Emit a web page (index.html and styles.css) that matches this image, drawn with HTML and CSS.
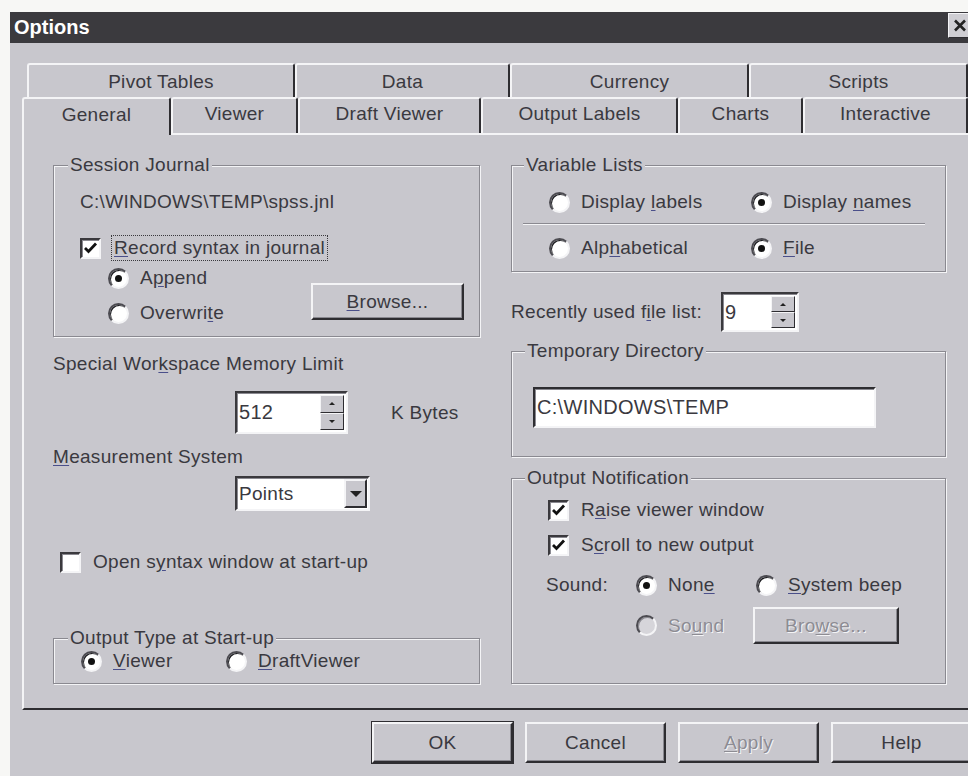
FILE: index.html
```html
<!DOCTYPE html>
<html lang="en">
<head>
<meta charset="utf-8">
<title>Options</title>
<link rel="stylesheet" href="styles.css">
</head>
<body>
<div class="window">
  <div class="titlebar">
    <span class="title">Options</span>
    <span class="close">
      <svg width="14" height="13" viewBox="0 0 14 13"><path d="M2 1.5 L12 11.5 M12 1.5 L2 11.5" stroke="#222" stroke-width="2.6" fill="none"/></svg>
    </span>
  </div>

  <div class="tabs">
    <div class="tab-row back">
      <div class="tab t-pivot">Pivot Tables</div>
      <div class="tab t-data">Data</div>
      <div class="tab t-currency">Currency</div>
      <div class="tab t-scripts">Scripts</div>
    </div>
    <div class="tab-row front">
      <div class="tab selected t-general">General</div>
      <div class="tab t-viewer">Viewer</div>
      <div class="tab t-draft">Draft Viewer</div>
      <div class="tab t-labels">Output Labels</div>
      <div class="tab t-charts">Charts</div>
      <div class="tab t-interactive">Interactive</div>
    </div>
  </div>

  <div class="panel">
    <div class="col">
      <fieldset class="group">
        <legend class="lg-left">Session Journal</legend>
        <div class="sj-body">
          <div class="line">C:\WINDOWS\TEMP\spss.jnl</div>
          <div class="line check-row sj-check">
            <span class="check"><svg width="17" height="17" viewBox="0 0 17 17"><path d="M3 8 L6.5 11.5 L14 3.5" stroke="#111" stroke-width="2.8" fill="none"/></svg></span>
            <span class="focus"><u>R</u>ecord syntax in journal</span>
          </div>
          <div class="sj-bottom">
            <div class="radios">
              <div class="line radio-row"><span class="radio on"></span><span>A<u>p</u>pend</span></div>
              <div class="line radio-row"><span class="radio"></span><span>Overwri<u>t</u>e</span></div>
            </div>
            <div class="btn btn-browse"><span><u>B</u>rowse...</span></div>
          </div>
        </div>
      </fieldset>

      <div class="line mem-label">Special Wor<u>k</u>space Memory Limit</div>
      <div class="mem-row">
        <div class="spin spin-mem">
          <span class="spin-value">512</span>
          <span class="spin-btns"><span class="spin-btn"><span class="tri-up"></span></span><span class="spin-btn"><span class="tri-down"></span></span></span>
        </div>
        <span class="kbytes">K Bytes</span>
      </div>

      <div class="line meas-label"><u>M</u>easurement System</div>
      <div class="meas-row">
        <div class="combo">
          <span class="combo-value">Points</span>
          <span class="combo-btn"><span class="tri-big"></span></span>
        </div>
      </div>

      <div class="line check-row open-row">
        <span class="check"></span>
        <span>Open s<u>y</u>ntax window at start-up</span>
      </div>

      <fieldset class="group out-type">
        <legend class="lg-left">Output Type at Start-up</legend>
        <div class="ot-body">
          <div class="line radio-row ot-item"><span class="radio on"></span><span><u>V</u>iewer</span></div>
          <div class="line radio-row"><span class="radio"></span><span><u>D</u>raftViewer</span></div>
        </div>
      </fieldset>
    </div>

    <div class="col">
      <fieldset class="group">
        <legend class="lg-right">Variable Lists</legend>
        <div class="vl-body">
          <div class="vl-row">
            <div class="line radio-row vl-item"><span class="radio"></span><span>Display <u>l</u>abels</span></div>
            <div class="line radio-row"><span class="radio on"></span><span>Display <u>n</u>ames</span></div>
          </div>
          <div class="separator"></div>
          <div class="vl-row vl-row2">
            <div class="line radio-row vl-item"><span class="radio"></span><span>Alp<u>h</u>abetical</span></div>
            <div class="line radio-row"><span class="radio on"></span><span><u>F</u>ile</span></div>
          </div>
        </div>
      </fieldset>

      <div class="recent-row">
        <span class="recent-label">Recently used f<u>i</u>le list:</span>
        <div class="spin spin-recent">
          <span class="spin-value">9</span>
          <span class="spin-btns"><span class="spin-btn"><span class="tri-up"></span></span><span class="spin-btn"><span class="tri-down"></span></span></span>
        </div>
      </div>

      <fieldset class="group temp-dir">
        <legend class="lg-right2">Temporary Directory</legend>
        <div class="td-body">
          <div class="textbox">C:\WINDOWS\TEMP</div>
        </div>
      </fieldset>

      <fieldset class="group out-notif">
        <legend class="lg-right2">Output Notification</legend>
        <div class="on-body">
          <div class="line check-row on-check">
            <span class="check"><svg width="17" height="17" viewBox="0 0 17 17"><path d="M3 8 L6.5 11.5 L14 3.5" stroke="#111" stroke-width="2.8" fill="none"/></svg></span>
            <span>R<u>a</u>ise viewer window</span>
          </div>
          <div class="line check-row on-check on-scroll">
            <span class="check"><svg width="17" height="17" viewBox="0 0 17 17"><path d="M3 8 L6.5 11.5 L14 3.5" stroke="#111" stroke-width="2.8" fill="none"/></svg></span>
            <span>S<u>c</u>roll to new output</span>
          </div>
          <div class="sound-row">
            <span class="line sound-label">Sound:</span>
            <div class="line radio-row sound-none"><span class="radio on"></span><span>Non<u>e</u></span></div>
            <div class="line radio-row"><span class="radio"></span><span><u>S</u>ystem beep</span></div>
          </div>
          <div class="sound-row2">
            <div class="line radio-row sound-file disabled"><span class="radio off"></span><span>So<u>u</u>nd</span></div>
            <div class="btn btn-snd disabled"><span>Bro<u>w</u>se...</span></div>
          </div>
        </div>
      </fieldset>
    </div>
  </div>

  <div class="buttons">
    <div class="btn btn-main btn-default">OK</div>
    <div class="btn btn-main">Cancel</div>
    <div class="btn btn-main disabled"><span><u>A</u>pply</span></div>
    <div class="btn btn-main">Help</div>
  </div>
</div>
</body>
</html>
```

FILE: styles.css
```css
* { box-sizing: border-box; }

html, body { margin: 0; padding: 0; }

body {
  width: 968px;
  height: 776px;
  overflow: hidden;
  background: #f7f7f5;
  font-family: "Liberation Sans", Arial, sans-serif;
  font-size: 19px;
  letter-spacing: 0.3px;
  color: #3a3940;
}

u { text-decoration: underline; text-decoration-color: #4a4f8a; text-underline-offset: 2px; }

/* dialog frame */
.window {
  margin: 12px 0 0 10px;
  width: 970px;
  height: 764px;
  background: #c8c7cd;
}

.titlebar {
  height: 31px;
  background: #3b3a3e;
  display: flex;
  justify-content: space-between;
  align-items: center;
  padding: 0 8px 0 4px;
}

.title {
  color: #fff;
  font-weight: bold;
  font-size: 20px;
  letter-spacing: 0;
}

.close {
  align-self: flex-start;
  margin-top: 1px;
  width: 24px;
  height: 25px;
  background: #cfced3;
  border: 1px solid;
  border-color: #f4f4f6 #2e2d31 #2e2d31 #f4f4f6;
  display: flex;
  align-items: center;
  justify-content: center;
}

/* tab strip: two rows */
.tabs { padding-top: 20px; }

.tab-row { display: flex; }
.tab-row.back { height: 34px; padding-left: 17px; }
.tab-row.front { height: 36px; padding-left: 12px; }

.tab {
  display: flex;
  align-items: center;
  justify-content: center;
  border-top: 2px solid #f4f4f6;
  border-left: 2px solid #f4f4f6;
  border-right: 2px solid #2e2d31;
  border-radius: 3px 3px 0 0;
  background: #c8c7cd;
}
.tab-row.back .tab { padding-top: 2px; }
.tab-row.front .tab { padding-bottom: 4px; }
.tab.selected {
  position: relative;
  z-index: 1;
  margin-bottom: -2px;
}

.t-pivot { width: 268px; }
.t-data { width: 215px; }
.t-currency { width: 239px; }
.t-scripts { width: 219px; }
.t-general { width: 149px; }
.t-viewer { width: 127px; }
.t-draft { width: 183px; }
.t-labels { width: 197px; }
.t-charts { width: 125px; }
.t-interactive { width: 165px; }

/* page body under the tabs */
.panel {
  margin-left: 12px;
  height: 577px;
  border-top: 2px solid #f4f4f6;
  border-left: 2px solid #f4f4f6;
  border-bottom: 2px solid #2e2d31;
  padding: 19px 0 0 29px;
  display: grid;
  grid-template-columns: 427px 435px;
  column-gap: 31px;
  align-items: start;
}

.col { display: flex; flex-direction: column; }

.line { line-height: 22px; height: 22px; white-space: nowrap; }

/* etched group boxes */
.group {
  margin: 0;
  padding: 0;
  min-width: 0;
  border: 1px solid #8a8990;
  box-shadow: inset 1px 1px 0 #f4f4f6, 1px 1px 0 #f4f4f6;
}
.group legend {
  padding: 0 2px;
  line-height: 22px;
  background: #c8c7cd;
  white-space: nowrap;
}
.lg-left { margin-left: 14px; }
.lg-right { margin-left: 12px; }
.lg-right2 { margin-left: 13px; }

/* check boxes and radio buttons */
.check-row, .radio-row { display: flex; align-items: center; }

.check {
  width: 21px;
  height: 21px;
  flex: none;
  background: #fff;
  border: 2px solid;
  border-color: #3a393d #f4f4f6 #f4f4f6 #3a393d;
  box-shadow: inset 1px 1px 0 #8a8990;
  display: flex;
  align-items: center;
  justify-content: center;
  margin-right: 12px;
}

.radio {
  width: 21px;
  height: 21px;
  flex: none;
  border-radius: 50%;
  background: #fff;
  border: 2px solid;
  border-color: #4c4b51 #f4f4f6 #f4f4f6 #4c4b51;
  box-shadow: inset 1px 1px 0 #1e1e22;
  display: flex;
  align-items: center;
  justify-content: center;
  margin-right: 11px;
}
.radio.on::after {
  content: "";
  width: 7px;
  height: 7px;
  border-radius: 50%;
  background: #111;
}
.radio.off { background: #d6d5da; box-shadow: inset 1px 1px 0 #8a8990; }

.focus { outline: 1px dotted #3a393d; outline-offset: 1px; padding: 0 1px; }

.disabled { color: #8d8c93; text-shadow: 1px 1px 0 #f4f4f6; }
.disabled u { text-decoration-color: #8d8c93; }

/* push buttons */
.btn {
  display: flex;
  align-items: center;
  justify-content: center;
  background: #c8c7cd;
  border: 2px solid;
  border-color: #f4f4f6 #2e2d31 #2e2d31 #f4f4f6;
  box-shadow: inset -1px -1px 0 #8a8990;
  white-space: nowrap;
}

/* session journal */
.sj-body { padding: 15px 0 12px 26px; }
.sj-check { margin-top: 24px; }
.sj-bottom { display: flex; align-items: flex-start; margin-top: 8px; }
.radios { display: flex; flex-direction: column; gap: 13px; padding-left: 28px; }
.btn-browse {
  width: 153px;
  height: 37px;
  margin: 16px 15px 0 auto;
}

/* memory limit and measurement */
.mem-label { margin-top: 16px; }
.mem-row { display: flex; align-items: center; margin-top: 16px; padding-left: 182px; }
.kbytes { margin-left: 43px; }

.spin {
  display: flex;
  align-items: stretch;
  background: #fff;
  border: 2px solid;
  border-color: #3a393d #f4f4f6 #f4f4f6 #3a393d;
  box-shadow: inset 1px 1px 0 #8a8990;
  padding: 2px 2px 2px 0;
}
.spin-mem { width: 113px; height: 43px; }
.spin-recent { width: 78px; height: 40px; }
.spin-value { flex: 1; padding-left: 2px; display: flex; align-items: center; font-size: 20px; }
.spin-btns { width: 24px; display: flex; flex-direction: column; }
.spin-btn {
  flex: 1;
  background: #c8c7cd;
  border: 1px solid;
  border-color: #f4f4f6 #2e2d31 #2e2d31 #f4f4f6;
  display: flex;
  align-items: center;
  justify-content: center;
}
.tri-up { border: 3px solid transparent; border-bottom: 3px solid #222; border-top: 0; }
.tri-down { border: 3px solid transparent; border-top: 3px solid #222; border-bottom: 0; }

.meas-label { margin-top: 12px; }
.meas-row { margin-top: 8px; padding-left: 182px; }
.combo {
  width: 135px;
  height: 35px;
  display: flex;
  background: #fff;
  border: 2px solid;
  border-color: #3a393d #f4f4f6 #f4f4f6 #3a393d;
  box-shadow: inset 1px 1px 0 #8a8990;
  padding: 1px 1px 1px 0;
}
.combo-value { flex: 1; display: flex; align-items: center; padding-left: 2px; }
.combo-btn {
  width: 23px;
  background: #c8c7cd;
  border: 2px solid;
  border-color: #f4f4f6 #2e2d31 #2e2d31 #f4f4f6;
  display: flex;
  align-items: center;
  justify-content: center;
}
.tri-big { border: 6px solid transparent; border-top: 6px solid #222; border-bottom: 0; }

.open-row { margin-top: 40px; padding-left: 7px; }

.out-type { margin-top: 54px; }
.ot-body { display: flex; padding: 1px 0 11px 27px; }
.ot-item { width: 145px; }

/* right column */
.vl-body { padding: 15px 0 12px 0; }
.vl-row { display: flex; padding-left: 37px; }
.vl-item { width: 202px; }
.separator {
  margin: 10px 20px 0 11px;
  border-top: 1px solid #8a8990;
  border-bottom: 1px solid #f4f4f6;
}
.vl-row2 { margin-top: 12px; }

.recent-row { display: flex; align-items: center; margin-top: 20px; }
.recent-label { width: 210px; white-space: nowrap; }

.temp-dir { margin-top: 8px; }
.td-body { padding: 25px 0 28px 21px; }
.textbox {
  width: 343px;
  height: 41px;
  background: #fff;
  border: 2px solid;
  border-color: #2e2d31 #f4f4f6 #f4f4f6 #2e2d31;
  box-shadow: inset 1px 1px 0 #8a8990;
  display: flex;
  align-items: center;
  padding-left: 2px;
  font-size: 20px;
  white-space: nowrap;
}

.out-notif { margin-top: 10px; }
.on-body { padding: 10px 0 39px 0; }
.on-check { padding-left: 36px; }
.on-scroll { margin-top: 13px; }
.sound-row { display: flex; margin-top: 18px; padding-left: 34px; }
.sound-label { width: 90px; }
.sound-none { width: 120px; }
.sound-row2 { display: flex; align-items: center; margin-top: 11px; padding-left: 124px; }
.sound-file { width: 117px; }
.btn-snd { width: 146px; height: 37px; }

/* dialog buttons */
.buttons {
  display: flex;
  justify-content: flex-end;
  gap: 12px;
  margin-top: 12px;
  padding-right: 8px;
}
.btn-main { width: 141px; height: 41px; }
.btn-default { outline: 1px solid #2e2d31; outline-offset: 0; }
```
